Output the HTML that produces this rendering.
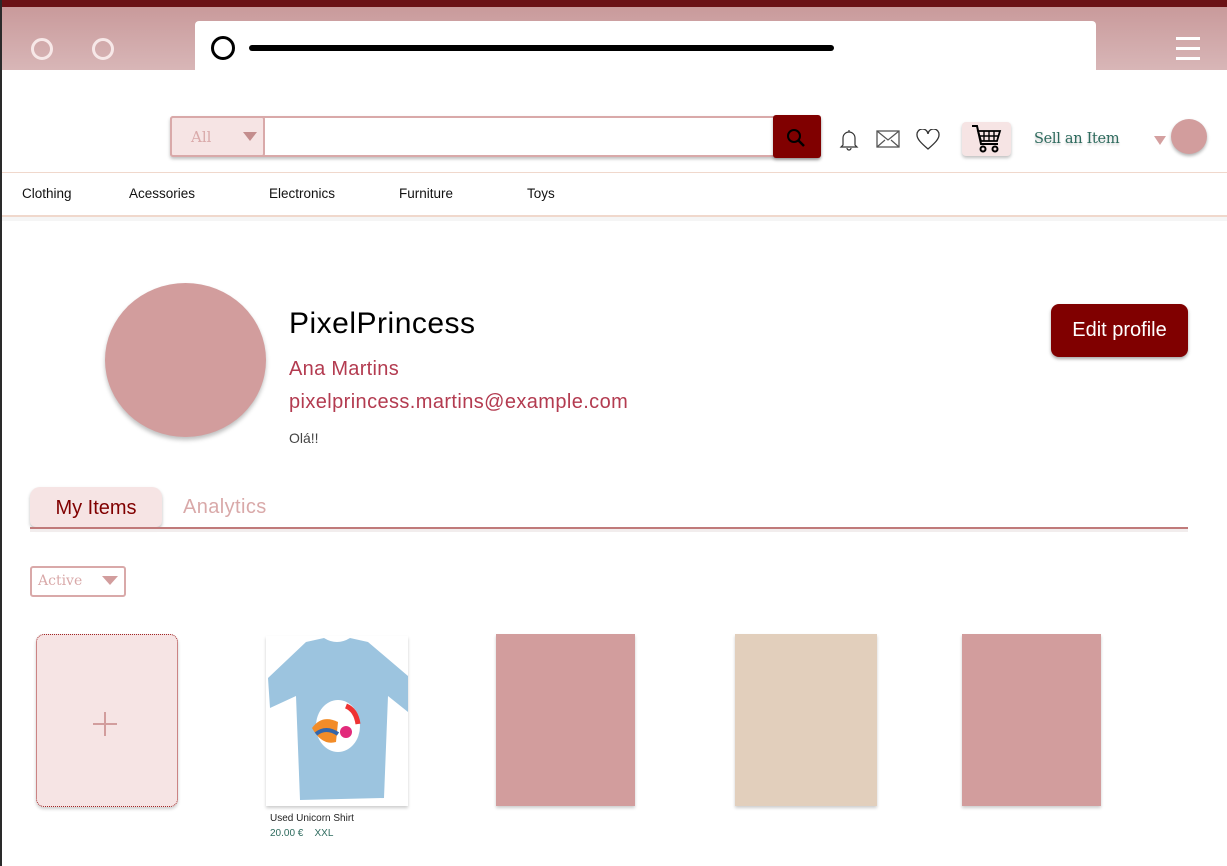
<!DOCTYPE html>
<html><head><meta charset="utf-8"><style>
*{margin:0;padding:0;box-sizing:border-box}
body{width:1227px;height:866px;background:#fff;position:relative;overflow:hidden;font-family:"Liberation Sans",sans-serif}
.a{position:absolute}
.serif{font-family:"DejaVu Serif","Liberation Serif",serif}
</style></head><body>
<div class="a" style="left:0;top:0;width:2px;height:866px;background:#2a2a2a;z-index:5"></div>
<div class="a" style="left:0;top:0;width:1227px;height:7px;background:#6b1216"></div>
<div class="a" style="left:0;top:7px;width:1227px;height:63px;background:linear-gradient(#c99a9b,#d8b6b7)"></div>
<div class="a" style="left:31px;top:38px;width:22px;height:22px;border:3px solid #f7e8e8;border-radius:50%"></div>
<div class="a" style="left:92px;top:38px;width:22px;height:22px;border:3px solid #f7e8e8;border-radius:50%"></div>
<div class="a" style="left:195px;top:21px;width:901px;height:49px;background:#fff;border-radius:4px 4px 0 0"></div>
<div class="a" style="left:211px;top:36px;width:24px;height:24px;border:3px solid #000;border-radius:50%"></div>
<div class="a" style="left:249px;top:45px;width:585px;height:6px;background:#000;border-radius:3px"></div>
<div class="a" style="left:1176px;top:37px;width:24px;height:3px;background:#fff"></div>
<div class="a" style="left:1176px;top:47px;width:24px;height:3px;background:#fff"></div>
<div class="a" style="left:1176px;top:57px;width:24px;height:3px;background:#fff"></div>

<div class="a" style="left:170px;top:116px;width:650px;height:41px;border:2px solid #d9a9a9;border-radius:3px;box-shadow:0 2px 3px rgba(0,0,0,.25)"></div>
<div class="a serif" style="left:170px;top:116px;width:95px;height:41px;background:#f6e4e4;border:2px solid #d9a9a9;border-radius:3px;color:#d9a9a9;font-size:15px;padding:10px 0 0 19px">All</div>
<div class="a" style="left:243px;top:132px;border-left:7px solid transparent;border-right:7px solid transparent;border-top:9px solid #c48d8d"></div>
<div class="a" style="left:773px;top:115px;width:48px;height:43px;background:#800000;border-radius:3px;box-shadow:0 2px 3px rgba(0,0,0,.3)"></div>
<svg class="a" style="left:786px;top:128px" width="22" height="20"><circle cx="8" cy="8" r="6" fill="none" stroke="#000" stroke-width="2"/><line x1="12" y1="12" x2="18" y2="18" stroke="#000" stroke-width="2.5"/></svg>
<svg class="a" style="left:838px;top:128px" width="22" height="24"><path d="M11 2v2M5 17V10a6 6 0 0 1 12 0v7l2 2H3z M9 20a2 2 0 0 0 4 0" fill="none" stroke="#333" stroke-width="1.2"/></svg>
<svg class="a" style="left:876px;top:130px" width="24" height="18"><rect x="1" y="1" width="22" height="16" fill="none" stroke="#555" stroke-width="1.3"/><path d="M1 1l11 9 11-9M1 17l8-7M23 17l-8-7" fill="none" stroke="#555" stroke-width="1.2"/></svg>
<svg class="a" style="left:916px;top:129px" width="24" height="21"><path d="M12 20C5 14 1 10 1 6a5 5 0 0 1 11-1 5 5 0 0 1 11 1c0 4-4 8-11 14z" fill="none" stroke="#333" stroke-width="1.3"/></svg>
<div class="a" style="left:962px;top:122px;width:49px;height:34px;background:#f6e4e4;border-radius:4px;box-shadow:0 2px 3px rgba(0,0,0,.25)"></div>
<svg class="a" style="left:970px;top:124px" width="34" height="30"><path d="M2 2h5l4 18h17" fill="none" stroke="#000" stroke-width="2"/><path d="M8 7h22l-3 10H11z" fill="none" stroke="#000" stroke-width="1.8"/><path d="M14 7v10M19 7v10M24 7v10M9 12h20" stroke="#000" stroke-width="1.4"/><circle cx="13" cy="25" r="2.5" fill="none" stroke="#000" stroke-width="2"/><circle cx="25" cy="25" r="2.5" fill="none" stroke="#000" stroke-width="2"/></svg>
<div class="a serif" style="left:1034px;top:131px;color:#2e6b5e;font-size:14.5px;letter-spacing:-0.3px;text-shadow:0 2px 2px rgba(0,0,0,.2)">Sell an Item</div>
<div class="a" style="left:1154px;top:136px;border-left:6px solid transparent;border-right:6px solid transparent;border-top:9px solid #d4a0a0"></div>
<div class="a" style="left:1171px;top:119px;width:36px;height:35px;border-radius:50%;background:#d29d9d;box-shadow:0 2px 3px rgba(0,0,0,.3)"></div>

<div class="a" style="left:0;top:172px;width:1227px;height:1px;background:#f0d8cc"></div>
<div class="a" style="left:0;top:215px;width:1227px;height:2px;background:#f0d8cc"></div>
<div class="a" style="left:0;top:217px;width:1227px;height:4px;background:#f5f5f5"></div>
<div class="a" style="top:186px;left:22px;font-size:13.5px;color:#111">Clothing</div>
<div class="a" style="top:186px;left:129px;font-size:13.5px;color:#111">Acessories</div>
<div class="a" style="top:186px;left:269px;font-size:13.5px;color:#111">Electronics</div>
<div class="a" style="top:186px;left:399px;font-size:13.5px;color:#111">Furniture</div>
<div class="a" style="top:186px;left:527px;font-size:13.5px;color:#111">Toys</div>

<div class="a" style="left:105px;top:283px;width:161px;height:154px;border-radius:50%;background:#d29d9d;box-shadow:0 3px 4px rgba(0,0,0,.25)"></div>
<div class="a" style="left:289px;top:307px;font-size:30px;color:#000;letter-spacing:0.5px">PixelPrincess</div>
<div class="a" style="left:289px;top:358px;font-size:20px;color:#b33b50;letter-spacing:0.3px">Ana Martins</div>
<div class="a" style="left:289px;top:391px;font-size:20px;color:#b33b50;letter-spacing:0.4px">pixelprincess.martins@example.com</div>
<div class="a" style="left:289px;top:430px;font-size:14px;color:#444">Olá!!</div>
<div class="a" style="left:1051px;top:304px;width:137px;height:53px;background:#800000;border-radius:8px;color:#fff;font-size:20px;text-align:center;line-height:53px;box-shadow:0 2px 3px rgba(0,0,0,.35)">Edit profile</div>

<div class="a" style="left:30px;top:487px;width:132px;height:40px;background:#f6e4e4;border-radius:10px 10px 6px 6px;box-shadow:0 2px 3px rgba(0,0,0,.25);color:#800000;font-size:20px;text-align:center;line-height:42px">My Items</div>
<div class="a" style="left:183px;top:496px;font-size:20px;color:#d9a9a9;letter-spacing:0.4px">Analytics</div>
<div class="a" style="left:30px;top:527px;width:1158px;height:2px;background:#c07a7a"></div>
<div class="a" style="left:30px;top:529px;width:1158px;height:3px;background:#f2eded"></div>

<div class="a serif" style="left:30px;top:566px;width:96px;height:31px;border:2px solid #d9a9a9;border-radius:3px;color:#d9a9a9;font-size:14px;padding:5px 0 0 6px">Active</div>
<div class="a" style="left:102px;top:576px;border-left:8px solid transparent;border-right:8px solid transparent;border-top:9px solid #d29d9d"></div>

<div class="a" style="left:36px;top:634px;width:142px;height:173px;background:#f6e4e4;border:1.5px dotted #a02525;border-radius:8px;box-shadow:0 2px 3px rgba(0,0,0,.2)"></div>
<div class="a" style="left:93px;top:723px;width:24px;height:2px;background:#d29d9d"></div>
<div class="a" style="left:104px;top:712px;width:2px;height:24px;background:#d29d9d"></div>

<div class="a" style="left:266px;top:636px;width:142px;height:170px;background:#fff;box-shadow:0 2px 3px rgba(0,0,0,.2)"></div>
<svg class="a" style="left:266px;top:636px" width="142" height="170"><path d="M40 6 L58 2 Q71 10 84 2 L102 6 L142 40 L142 76 L122 60 L118 162 L34 164 L30 60 L4 72 L2 42 Z" fill="#9cc4df"/><ellipse cx="72" cy="90" rx="22" ry="26" fill="#fff"/><path d="M46 92q10-14 26-6l-2 20q-14 4-24-14z" fill="#f28c28"/><path d="M50 98q10-8 22 0" stroke="#36a" stroke-width="4" fill="none"/><path d="M80 70q10 4 12 18" stroke="#e33" stroke-width="5" fill="none"/><circle cx="80" cy="96" r="6" fill="#e22a7b"/></svg>
<div class="a" style="left:270px;top:813px;font-size:10px;color:#222">Used Unicorn Shirt</div>
<div class="a" style="left:270px;top:828px;font-size:10px;color:#2e6b5e">20.00 €&nbsp;&nbsp;&nbsp;&nbsp;XXL</div>

<div class="a" style="left:496px;top:634px;width:139px;height:172px;background:#d29d9d;box-shadow:0 2px 3px rgba(0,0,0,.2)"></div>
<div class="a" style="left:735px;top:634px;width:142px;height:172px;background:#e2cfbc;box-shadow:0 2px 3px rgba(0,0,0,.2)"></div>
<div class="a" style="left:962px;top:634px;width:139px;height:172px;background:#d29d9d;box-shadow:0 2px 3px rgba(0,0,0,.2)"></div>
</body></html>
